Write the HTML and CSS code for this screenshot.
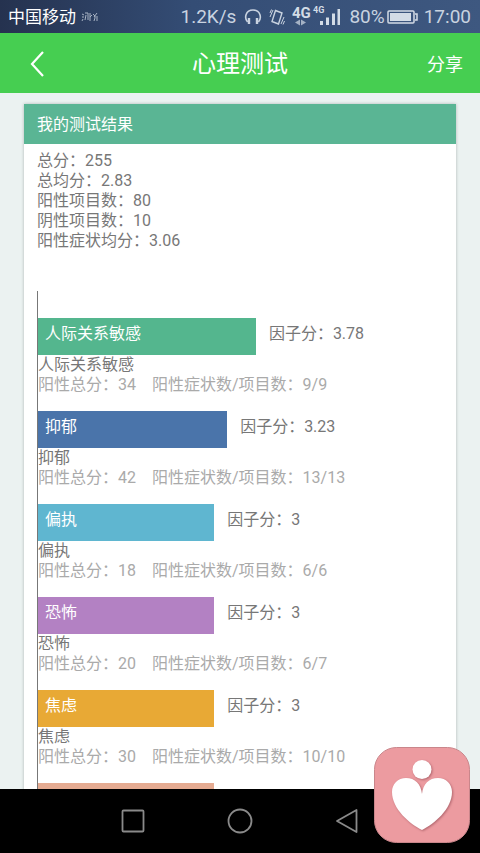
FILE: index.html
```
<!DOCTYPE html>
<html lang="zh-CN">
<head>
    <meta charset="UTF-8">
    <meta name="viewport" content="width=device-width, initial-scale=1">
    <title>心理测试</title>
    <link rel="stylesheet" href="styles.css">
</head>
<body>
    <div class="status-bar">
        <span class="carrier">中国移动</span>
        <svg class="carrier-mark" width="18" height="10" viewBox="0 0 18 10" fill="none" stroke="#a9b4c4" stroke-width="1">
            <path d="M1 2l2 1M1 5h2M2 7l-1 2M4 1h3M5 3l-1 5M7 1v7M9 1v8M11 3l-2 2M12 2l2 2M16 1l-3 4h4M14 6l-1 3M16 6v3"/>
        </svg>
        <div class="status-right">
            <span class="speed">1.2K/s</span>
            <svg width="18" height="18" viewBox="0 0 18 18" fill="none" stroke="#c9d3e0" stroke-width="1.6">
                <path d="M3.6 14C0 10 1.5 2 9 2s9 8 5.400 12"/>
                <path d="M5 10v6M13 10v6" stroke-width="2.400"/>
            </svg>
            <svg class="vibrate" width="16" height="18" viewBox="0 0 16 18" fill="none" stroke="#c9d3e0" stroke-width="1.400">
                <path d="M6.500 2.500l6.500 2.500-3.500 11L3 13.500z"/>
                <path d="M1 9l3-7M1 5l1.500-3.500M12 16l3-7M14 16.500l1.500-3.500" stroke-width="1"/>
            </svg>
            <svg class="network" width="49" height="22" viewBox="0 0 49 22" fill="#d3dce6">
                <text class="net-big" x="0" y="14">4G</text>
                <path d="M3 18.500l5-3v6zM14 18.500l-5-3v6z" opacity=".7"/>
                <text class="net-small" x="21" y="9">4G</text>
                <path d="M28 17h3v4h-3zM34 13.500h3V21h-3zM40 9.500h3V21h-3zM45.500 5H48v16h-2.500z"/>
            </svg>
            <span class="percent">80%</span>
            <svg class="battery" width="31" height="14" viewBox="0 0 31 14" fill="none" stroke="#d3dce6" stroke-width="1.500">
                <rect x="1" y="1" width="26" height="12" rx="1"/>
                <path d="M3 3h21v8H3z" fill="#d3dce6" stroke="none"/>
                <path d="M28 4h2v6h-2"/>
            </svg>
            <span class="clock">17:00</span>
        </div>
    </div>

    <header class="header">
        <button class="back" type="button" aria-label="返回">
            <svg width="14" height="26" viewBox="0 0 14 26" fill="none" stroke="#fff" stroke-width="2.200">
                <path d="M13 1L2 13l11 12"/>
            </svg>
        </button>
        <h1>心理测试</h1>
        <button class="share" type="button">分享</button>
    </header>

    <main class="content">
        <section class="card">
            <h2>我的测试结果</h2>
            <ul class="summary">
                <li>总分：255</li>
                <li>总均分：2.83</li>
                <li>阳性项目数：80</li>
                <li>阴性项目数：10</li>
                <li>阳性症状均分：3.06</li>
            </ul>

            <div class="chart">
                <div class="factor">
                    <div class="bar-row">
                        <div class="bar green" style="width: 53.8%">人际关系敏感</div>
                        <span class="score">因子分：3.78</span>
                    </div>
                    <p class="name">人际关系敏感</p>
                    <p class="detail"><span>阳性总分：34</span><span>阳性症状数/项目数：9/9</span></p>
                </div>
                <div class="factor">
                    <div class="bar-row">
                        <div class="bar blue" style="width: 46.7%">抑郁</div>
                        <span class="score">因子分：3.23</span>
                    </div>
                    <p class="name">抑郁</p>
                    <p class="detail"><span>阳性总分：42</span><span>阳性症状数/项目数：13/13</span></p>
                </div>
                <div class="factor">
                    <div class="bar-row">
                        <div class="bar cyan" style="width: 43.5%">偏执</div>
                        <span class="score">因子分：3</span>
                    </div>
                    <p class="name">偏执</p>
                    <p class="detail"><span>阳性总分：18</span><span>阳性症状数/项目数：6/6</span></p>
                </div>
                <div class="factor">
                    <div class="bar-row">
                        <div class="bar purple" style="width: 43.5%">恐怖</div>
                        <span class="score">因子分：3</span>
                    </div>
                    <p class="name">恐怖</p>
                    <p class="detail"><span>阳性总分：20</span><span>阳性症状数/项目数：6/7</span></p>
                </div>
                <div class="factor">
                    <div class="bar-row">
                        <div class="bar orange" style="width: 43.5%">焦虑</div>
                        <span class="score">因子分：3</span>
                    </div>
                    <p class="name">焦虑</p>
                    <p class="detail"><span>阳性总分：30</span><span>阳性症状数/项目数：10/10</span></p>
                </div>
                <div class="factor">
                    <div class="bar-row">
                        <div class="bar salmon" style="width: 43.5%"></div>
                    </div>
                </div>
            </div>
        </section>
    </main>

    <nav class="nav-bar">
        <button type="button" aria-label="最近任务">
            <svg width="26" height="26" viewBox="0 0 26 26" fill="none" stroke="#8a8a8a" stroke-width="1.800">
                <rect x="2.500" y="2.500" width="21" height="21" rx="1"/>
            </svg>
        </button>
        <button type="button" aria-label="主页">
            <svg width="26" height="26" viewBox="0 0 26 26" fill="none" stroke="#8a8a8a" stroke-width="1.800">
                <circle cx="13" cy="13" r="11.500"/>
            </svg>
        </button>
        <button type="button" aria-label="返回">
            <svg width="26" height="26" viewBox="0 0 26 26" fill="none" stroke="#8a8a8a" stroke-width="1.800" stroke-linejoin="round">
                <path d="M22.500 2v22L3 13z"/>
            </svg>
        </button>
    </nav>

    <button class="float-logo" type="button" aria-label="心理">
        <svg width="96" height="96" viewBox="0 0 96 96">
            <rect x=".5" y=".5" width="95" height="95" rx="22" fill="#ec9ba0" stroke="#c9868b"/>
            <g class="logo-shape" fill="#fff">
                <circle cx="48" cy="22.500" r="9.500"/>
                <path d="M48 83C36 77 18 62 18 45c0-8 6-14 14-14 9 0 15 6 16 16 1-10 7-16 16-16 8 0 14 6 14 14 0 17-18 32-30 38z"/>
            </g>
        </svg>
    </button>
</body>
</html>
```
FILE: styles.css
```
* {
    box-sizing: border-box;
}

body {
    display: flex;
    flex-direction: column;
    height: 100vh;
    margin: 0;
    background-color: #ebf2f1;
    color: #777;
    font-family: Roboto, "Noto Sans CJK SC", sans-serif;
    font-size: 16px;
    line-height: 20px;
    overflow: hidden;
}

h1, h2, p, ul {
    margin: 0;
    padding: 0;
    font-weight: normal;
}

button {
    padding: 0;
    border: none;
    background: none;
    color: inherit;
    font: inherit;
    cursor: pointer;
}

svg {
    display: block;
}

/* phone status bar */
.status-bar {
    display: flex;
    flex-shrink: 0;
    align-items: center;
    height: 33px;
    padding: 1px 9px 0 8px;
    background: linear-gradient(90deg, #25324f, #344d75 40%, #3e5880);
    color: #c9d3e0;
    font-size: 19px;
}

.carrier {
    color: #fff;
    font-size: 17px;
}

.carrier-mark {
    margin-left: 5px;
}

.status-right {
    display: flex;
    align-items: center;
    margin-left: auto;
}

.speed {
    margin-right: 8px;
}

.vibrate {
    margin-left: 7px;
}

.network {
    margin: 0 8px 4px 7px;
}

.net-big {
    font-size: 15px;
    font-weight: bold;
}

.net-small {
    font-size: 9px;
    font-weight: bold;
}

.battery {
    margin: 0 6px 0 2px;
}

/* title bar */
.header {
    display: grid;
    grid-template-columns: 1fr auto 1fr;
    flex-shrink: 0;
    align-items: center;
    height: 60px;
    padding: 1px 17px 0;
    background-color: #46ce51;
    color: #fff;
}

.header h1 {
    font-size: 24px;
    line-height: 32px;
}

.back {
    justify-self: start;
    padding: 0 13px;
}

.share {
    justify-self: end;
    padding-top: 2px;
    font-size: 18px;
}

.content {
    flex: 1;
    min-height: 0;
    padding: 11px 24px 0;
    overflow: hidden;
}

.card {
    background-color: #fff;
    box-shadow: 0 0 3px rgba(0, 0, 0, 0.25);
}

.card h2 {
    padding: 11px 13px 9px;
    background-color: #5ab594;
    color: #fff;
    font-size: 16px;
}

.summary {
    padding: 7px 13px 5px;
    list-style: none;
}

/* factor chart */
.chart {
    margin: 35px 13px 0;
    padding-top: 27px;
    border-left: 1px solid #777;
}

.factor {
    padding-bottom: 16px;
}

.bar-row {
    display: flex;
    align-items: center;
}

.bar {
    height: 37px;
    padding: 6px 7px;
    color: #fff;
}

.score {
    margin: 0 0 5px 13px;
}

.detail {
    display: flex;
    gap: 16px;
    color: #aaa;
}

.green { background-color: #54b68e; }
.blue { background-color: #4a74aa; }
.cyan { background-color: #5fb6d0; }
.purple { background-color: #b381c3; }
.orange { background-color: #e8a935; }
.salmon { background-color: #e5ab92; }

/* system buttons */
.nav-bar {
    display: flex;
    flex-shrink: 0;
    align-items: center;
    justify-content: center;
    gap: 81px;
    height: 64px;
    background-color: #000;
}

.float-logo {
    position: fixed;
    right: 10px;
    bottom: 10px;
}

.logo-shape {
    filter: drop-shadow(1px 1px 1px rgba(120, 50, 60, 0.5));
}
```
